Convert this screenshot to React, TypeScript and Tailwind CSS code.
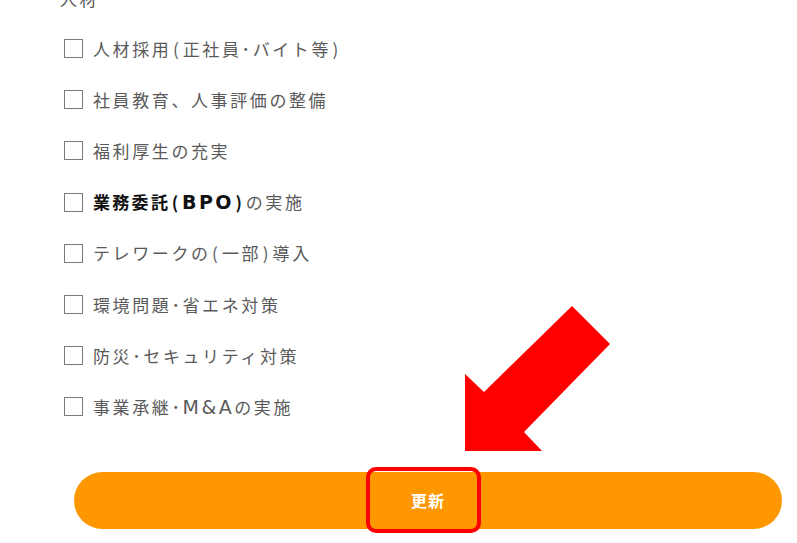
import React from "react";

const items: { bold?: string; text: string }[] = [
  { text: "人材採用(正社員･バイト等)" },
  { text: "社員教育、人事評価の整備" },
  { text: "福利厚生の充実" },
  { bold: "業務委託(BPO)", text: "の実施" },
  { text: "テレワークの(一部)導入" },
  { text: "環境問題･省エネ対策" },
  { text: "防災･セキュリティ対策" },
  { text: "事業承継･M&Aの実施" },
];

const font = { fontFamily: '"Noto Sans CJK JP", "Noto Sans", sans-serif' };
const latin = { fontFamily: '"DejaVu Sans", "Noto Sans CJK JP", sans-serif' };

// parens and latin words get a little extra room, as in the original page
const Label: React.FC<{ text: string }> = ({ text }) => (
  <>
    {text.split(/([()]|[A-Za-z&]+)/).map((part, i) => {
      if (part === "(" || part === ")") {
        return (
          <span key={i} className="mx-[1.5px]">
            {part}
          </span>
        );
      }
      if (/^[A-Za-z&]+$/.test(part)) {
        return (
          <span key={i} className="text-[19px] leading-none tracking-[2.5px]" style={latin}>
            {part}
          </span>
        );
      }
      return <React.Fragment key={i}>{part}</React.Fragment>;
    })}
  </>
);

const App: React.FC = () => {
  return (
    <div
      className="relative w-[797px] h-[543px] overflow-hidden bg-white"
      style={font}
    >
      <div className="pl-[60px]">
        <p className="mt-[-15px] h-[28px] text-[17px] leading-[28px] tracking-[2.6px] text-[#5a5a5a]">
          人材
        </p>
        <ul className="mt-[10px] pl-[4px]">
          {items.map((item) => (
            <li key={item.text + (item.bold ?? "")} className="flex h-[51.2px] items-center">
              <span className="block h-[19px] w-[19px] shrink-0 border border-[#7a7a7a] bg-white" />
              <span className="ml-[10px] text-[17px] leading-[28px] tracking-[2.6px] text-[#5a5a5a]">
                {item.bold && (
                  <span className="font-bold tracking-[2.3px] text-[#111]">
                    <Label text={item.bold} />
                  </span>
                )}
                <Label text={item.text} />
              </span>
            </li>
          ))}
        </ul>
      </div>

      <div className="mt-[39px] pl-[74px] pr-[15px]">
        <button
          type="button"
          className="flex h-[57px] w-[708px] items-center justify-center rounded-full bg-[#ff9800] text-[16px] font-bold tracking-[1px] text-white"
        >
          更新
        </button>
      </div>

      {/* highlight box over the button */}
      <div className="absolute left-[366px] top-[467px] h-[66px] w-[115px] rounded-[10px] border-[4px] border-[#ff0000]" />

      {/* red arrow */}
      <svg
        className="absolute left-0 top-0"
        width="797"
        height="543"
        viewBox="0 0 797 543"
      >
        <polygon
          points="572,306 610,344 524,432 542,451 465,451 465,374 484,392"
          fill="#ff0000"
        />
      </svg>
    </div>
  );
};

export default App;
